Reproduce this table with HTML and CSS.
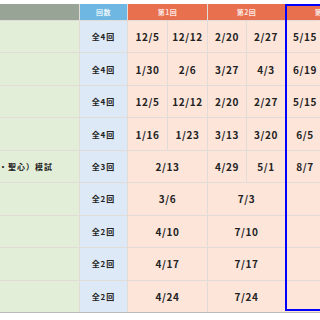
FILE: index.html
```html
<!DOCTYPE html>
<html lang="ja">
<head>
<meta charset="utf-8">
<link rel="stylesheet" href="styles.css">
</head>
<body>
<div class="wrap">
  <div class="grid">
    <div class="h h-name"></div>
    <div class="h h-count">回数</div>
    <div class="h h-round span2">第1回</div>
    <div class="h h-round span2">第2回</div>
    <div class="h h-round span2">第3回</div>

    <div class="c name"></div><div class="c cnt">全4回</div>
    <div class="c d">12/5</div><div class="c d">12/12</div><div class="c d">2/20</div><div class="c d">2/27</div><div class="c d">5/15</div><div class="c d"></div>

    <div class="c name"></div><div class="c cnt">全4回</div>
    <div class="c d">1/30</div><div class="c d">2/6</div><div class="c d">3/27</div><div class="c d">4/3</div><div class="c d">6/19</div><div class="c d"></div>

    <div class="c name"></div><div class="c cnt">全4回</div>
    <div class="c d">12/5</div><div class="c d">12/12</div><div class="c d">2/20</div><div class="c d">2/27</div><div class="c d">5/15</div><div class="c d"></div>

    <div class="c name"></div><div class="c cnt">全4回</div>
    <div class="c d">1/16</div><div class="c d">1/23</div><div class="c d">3/13</div><div class="c d">3/20</div><div class="c d">6/5</div><div class="c d"></div>

    <div class="c name"><span class="clip">・聖心）模試</span></div><div class="c cnt">全3回</div>
    <div class="c d span2">2/13</div><div class="c d">4/29</div><div class="c d">5/1</div><div class="c d">8/7</div><div class="c d"></div>

    <div class="c name"></div><div class="c cnt">全2回</div>
    <div class="c d span2">3/6</div><div class="c d span2">7/3</div><div class="c d span2"></div>

    <div class="c name"></div><div class="c cnt">全2回</div>
    <div class="c d span2">4/10</div><div class="c d span2">7/10</div><div class="c d span2"></div>

    <div class="c name"></div><div class="c cnt">全2回</div>
    <div class="c d span2">4/17</div><div class="c d span2">7/17</div><div class="c d span2"></div>

    <div class="c name"></div><div class="c cnt">全2回</div>
    <div class="c d span2">4/24</div><div class="c d span2">7/24</div><div class="c d span2"></div>
  </div>
  <div class="focus"></div>
</div>
</body>
</html>
```

FILE: styles.css
```css
html, body {
  margin: 0;
  padding: 0;
  background: #ffffff;
  overflow: hidden;
  width: 320px;
  height: 320px;
}
.wrap {
  position: relative;
  padding-top: 4px;
  width: 400px;
}
.grid {
  display: grid;
  grid-template-columns: 79px 47px 39px 39px 38px 38px 38px 38px;
  grid-template-rows: 16px repeat(9, 1fr);
  height: 308px;
  gap: 1px;
  background: #e1dcd8;
  border-bottom: 1px solid #b9b9b9;
  font-family: "Noto Sans CJK JP", "Noto Sans", sans-serif;
  font-weight: 700;
  color: #222222;
}
.span2 { grid-column: span 2; }
.h {
  display: flex;
  align-items: center;
  justify-content: center;
  font-size: 7px;
  color: rgba(255,255,255,0.85);
  letter-spacing: 0.5px;
}
.h-name { background: #98a495; }
.h-count { background: #6db7e2; }
.h-round { background: #e9704f; }
.c {
  display: flex;
  align-items: center;
  justify-content: center;
  overflow: hidden;
  white-space: nowrap;
}
.name { background: #e3eed9; justify-content: flex-end; padding-right: 26px; }
.cnt { background: #dde9f6; font-size: 8px; letter-spacing: 1px; }
.d { background: #fde5da; font-size: 10px; letter-spacing: 0.6px; }
.clip { font-size: 8px; letter-spacing: 1px; }
.focus {
  position: absolute;
  left: 285px;
  top: 4px;
  width: 100px;
  height: 307px;
  border: 2px solid #0000ff;
  box-sizing: border-box;
}
```
